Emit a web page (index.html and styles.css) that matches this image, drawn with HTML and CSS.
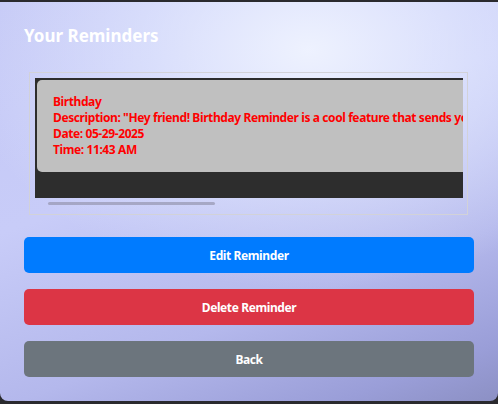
FILE: index.html
```html
<!DOCTYPE html>
<html>
<head>
<meta charset="utf-8">
<link rel="stylesheet" href="styles.css">
</head>
<body>
<div class="panel">
  <h1 class="title">Your Reminders</h1>
  <div class="frame">
    <div class="scroller">
      <div class="card">
        <div class="line">Birthday</div>
        <div class="line">Description: "Hey friend! Birthday Reminder is a cool feature that sends you a reminder before your friend's birthday so you never forget."</div>
        <div class="line">Date: 05-29-2025</div>
        <div class="line">Time: 11:43 AM</div>
      </div>
    </div>
    <div class="thumb"></div>
  </div>
  <div class="actions">
    <button class="btn btn-edit">Edit Reminder</button>
    <button class="btn btn-delete">Delete Reminder</button>
    <button class="btn btn-back">Back</button>
  </div>
</div>
</body>
</html>
```
FILE: styles.css
```css
html, body {
  margin: 0;
  padding: 0;
  background: #2a2a2e;
  height: 100%;
  overflow: hidden;
}
body {
  font-family: "Noto Sans", "Open Sans", sans-serif;
}
.panel {
  margin-top: 2px;
  height: 399px;
  box-sizing: border-box;
  padding: 0 24px;
  border-radius: 0 0 8px 8px;
  background:
    radial-gradient(ellipse 70% 60% at 62% 12%, rgba(240,244,255,0.95) 0%, rgba(230,236,255,0.6) 45%, rgba(210,216,255,0) 100%),
    linear-gradient(160deg, #c4c8f6 0%, #c8ccf8 40%, #b4b8ec 70%, #9a9ed8 90%, #8c90c4 100%);
  overflow: hidden;
}
.title {
  margin: 0;
  padding-top: 22px;
  height: 70px;
  box-sizing: border-box;
  font-size: 17px;
  font-weight: 700;
  color: #ffffff;
  line-height: 24px;
}
.frame {
  margin-left: 5px;
  width: 439px;
  height: 143px;
  border: 1px solid #d2d2d8;
  padding: 5px 5px 0 5px;
  box-sizing: border-box;
}
.scroller {
  width: 428px;
  height: 120px;
  background: #2d2d2d;
  padding: 2px 0 0 2px;
  box-sizing: border-box;
  overflow: hidden;
}
.card {
  width: 700px;
  background: #c0c0c0;
  border-radius: 5px;
  padding: 14px 16px;
  box-sizing: border-box;
}
.line {
  color: #ff0000;
  font-weight: 700;
  font-size: 12px;
  line-height: 16px;
  letter-spacing: -0.4px;
  white-space: nowrap;
}
.thumb {
  margin: 4px 0 0 13px;
  width: 167px;
  height: 3px;
  border-radius: 2px;
  background: rgba(150,150,175,0.7);
}
.actions {
  display: flex;
  flex-direction: column;
  gap: 16px;
  margin-top: 22px;
}
.btn {
  display: block;
  width: 450px;
  height: 36px;
  border: none;
  border-radius: 5px;
  color: #ffffff;
  font-family: "Noto Sans", "Open Sans", sans-serif;
  font-weight: 700;
  font-size: 12px;
  letter-spacing: -0.4px;
  padding: 0;
}
.btn-edit { background: #007bff; }
.btn-delete { background: #dc3545; }
.btn-back { background: #6c757d; }
```
